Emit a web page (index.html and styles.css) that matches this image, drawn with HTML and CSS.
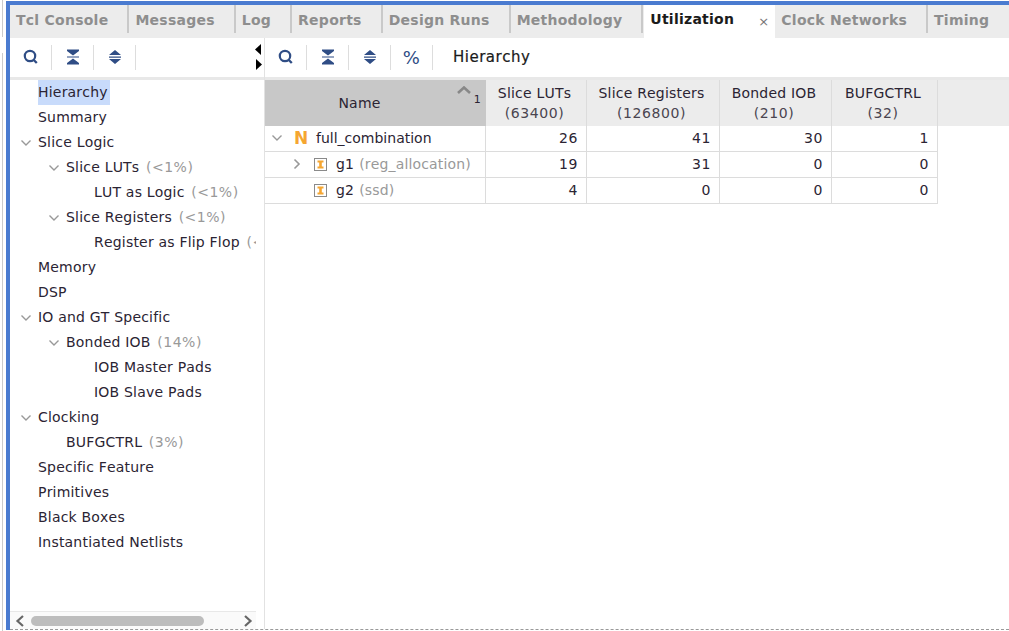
FILE: index.html

```html
<!DOCTYPE html>
<html lang="en">
<head>
    <meta charset="UTF-8">
    <title>Utilization</title>
    <link rel="stylesheet" href="styles.css">
</head>
<body>
    <svg class="defs" width="0" height="0">
        <symbol id="i-search" viewBox="0 0 16 16"><circle cx="7" cy="7" r="5.200" fill="none" stroke="#2f4d85" stroke-width="2.200"/><path d="M10.800 11 13.800 14" stroke="#2f4d85" stroke-width="2.400"/></symbol>
        <symbol id="i-collapse" viewBox="0 0 16 16"><path d="M2 0.500H14V2L8 6.500 2 2ZM2 7.500H14V8.500H2ZM8 9.500 14 14V15.500H2V14Z" fill="#2f4d85"/></symbol>
        <symbol id="i-expand" viewBox="0 0 16 16"><path d="M8 1 14 6H2ZM2 7.500H14V8.700H2ZM2 10H14L8 15Z" fill="#2f4d85"/></symbol>
        <symbol id="i-down" viewBox="0 0 12 12"><path d="M1.500 3.500 6 8 10.500 3.500" fill="none" stroke="#999" stroke-width="1.400"/></symbol>
        <symbol id="i-right" viewBox="0 0 12 12"><path d="M3.500 1.500 8 6 3.500 10.500" fill="none" stroke="#999" stroke-width="1.600"/></symbol>
        <symbol id="i-inst" viewBox="0 0 13 13"><rect x=".5" y=".5" width="12" height="12" fill="#fff" stroke="#8a8a8a"/><path d="M3.500 2.500H9.500V4.500H7.800V8.500H9.500V10.500H3.500V8.500H5.200V4.500H3.500Z" fill="#f5a631"/></symbol>
    </svg>

    <div class="window">
        <div class="tabs">
            <div class="tab">Tcl Console</div>
            <div class="tab">Messages</div>
            <div class="tab">Log</div>
            <div class="tab">Reports</div>
            <div class="tab">Design Runs</div>
            <div class="tab">Methodology</div>
            <div class="tab active">Utilization<span class="close">×</span></div>
            <div class="tab">Clock Networks</div>
            <div class="tab last">Timing</div>
        </div>

        <div class="main">
            <div class="left">
                <div class="toolbar">
                    <span class="tool"><svg width="16" height="16"><use href="#i-search"/></svg></span>
                    <span class="tool"><svg width="16" height="16"><use href="#i-collapse"/></svg></span>
                    <span class="tool"><svg width="16" height="16"><use href="#i-expand"/></svg></span>
                    <span class="splitter">
                        <svg width="7" height="11"><path d="M6 0V11L0 5.500Z"/></svg>
                        <svg width="7" height="11"><path d="M1 0V11L7 5.500Z"/></svg>
                    </span>
                </div>
                <div class="tree">
                    <div class="node l0"><span class="label selected">Hierarchy</span></div>
                    <div class="node l0"><span class="label">Summary</span></div>
                    <div class="node l0 open"><svg width="12" height="12"><use href="#i-down"/></svg><span class="label">Slice Logic</span></div>
                    <div class="node l1 open"><svg width="12" height="12"><use href="#i-down"/></svg><span class="label">Slice LUTs <em>(&lt;1%)</em></span></div>
                    <div class="node l2"><span class="label">LUT as Logic <em>(&lt;1%)</em></span></div>
                    <div class="node l1 open"><svg width="12" height="12"><use href="#i-down"/></svg><span class="label">Slice Registers <em>(&lt;1%)</em></span></div>
                    <div class="node l2"><span class="label">Register as Flip Flop <em>(&lt;1%)</em></span></div>
                    <div class="node l0"><span class="label">Memory</span></div>
                    <div class="node l0"><span class="label">DSP</span></div>
                    <div class="node l0 open"><svg width="12" height="12"><use href="#i-down"/></svg><span class="label">IO and GT Specific</span></div>
                    <div class="node l1 open"><svg width="12" height="12"><use href="#i-down"/></svg><span class="label">Bonded IOB <em>(14%)</em></span></div>
                    <div class="node l2"><span class="label">IOB Master Pads</span></div>
                    <div class="node l2"><span class="label">IOB Slave Pads</span></div>
                    <div class="node l0 open"><svg width="12" height="12"><use href="#i-down"/></svg><span class="label">Clocking</span></div>
                    <div class="node l1"><span class="label">BUFGCTRL <em>(3%)</em></span></div>
                    <div class="node l0"><span class="label">Specific Feature</span></div>
                    <div class="node l0"><span class="label">Primitives</span></div>
                    <div class="node l0"><span class="label">Black Boxes</span></div>
                    <div class="node l0"><span class="label">Instantiated Netlists</span></div>
                </div>
                <div class="hscroll">
                    <svg width="12" height="14"><path d="M9 2 3.500 7 9 12" fill="none" stroke="#666" stroke-width="2.200"/></svg>
                    <div class="track"><div class="thumb"></div></div>
                    <svg width="12" height="14"><path d="M3 2 8.500 7 3 12" fill="none" stroke="#666" stroke-width="2.200"/></svg>
                </div>
            </div>

            <div class="right">
                <div class="toolbar">
                    <span class="tool"><svg width="16" height="16"><use href="#i-search"/></svg></span>
                    <span class="tool"><svg width="16" height="16"><use href="#i-collapse"/></svg></span>
                    <span class="tool"><svg width="16" height="16"><use href="#i-expand"/></svg></span>
                    <span class="tool percent">%</span>
                    <span class="view-name">Hierarchy</span>
                </div>
                <table class="util">
                    <colgroup>
                        <col class="c-name"><col class="c-a"><col class="c-b"><col class="c-c"><col class="c-d"><col>
                    </colgroup>
                    <thead>
                        <tr>
                            <th class="sorted">Name<svg class="caret" width="14" height="8"><path d="M1 7 7 1.500 13 7" fill="none" stroke="#888" stroke-width="2.600"/></svg><span class="sort-no">1</span></th>
                            <th>Slice LUTs<br><span class="dim">(63400)</span></th>
                            <th>Slice Registers<br><span class="dim">(126800)</span></th>
                            <th>Bonded IOB<br><span class="dim">(210)</span></th>
                            <th>BUFGCTRL<br><span class="dim">(32)</span></th>
                            <th class="rest"></th>
                        </tr>
                    </thead>
                    <tbody>
                        <tr>
                            <td class="name"><svg class="tw" width="12" height="12"><use href="#i-down"/></svg><span class="n-icon">N</span>full_combination</td>
                            <td>26</td><td>41</td><td>30</td><td>1</td><td class="rest"></td>
                        </tr>
                        <tr>
                            <td class="name sub"><svg class="tw" width="12" height="12"><use href="#i-right"/></svg><svg class="inst" width="13" height="13"><use href="#i-inst"/></svg>g1 <em>(reg_allocation)</em></td>
                            <td>19</td><td>31</td><td>0</td><td>0</td><td class="rest"></td>
                        </tr>
                        <tr>
                            <td class="name sub"><span class="tw-gap"></span><svg class="inst" width="13" height="13"><use href="#i-inst"/></svg>g2 <em>(ssd)</em></td>
                            <td>4</td><td>0</td><td>0</td><td>0</td><td class="rest"></td>
                        </tr>
                    </tbody>
                </table>
            </div>
        </div>
    </div>
</body>
</html>
```

FILE: styles.css

```css
* {
    margin: 0;
    padding: 0;
    box-sizing: border-box;
}
html, body {
    width: 1009px;
    height: 631px;
    overflow: hidden;
    background-color: #fff;
}
body {
    padding: 1px 0 1px 6px;
    background-image: linear-gradient(#ccc, #ccc), linear-gradient(#ccc, #ccc);
    background-size: 1px 37px, 1px 578px;
    background-position: 2px 0, 2px 53px;
    background-repeat: no-repeat;
    font-family: "DejaVu Sans", sans-serif;
    font-size: 14px;
    font-kerning: none;
    letter-spacing: .2px;
    color: #2b2433;
}
.defs {
    position: absolute;
}
.window {
    height: 629px;
    display: flex;
    flex-direction: column;
    border-top: 4px solid #4a7bd0;
    border-left: 4px solid #4a7bd0;
}
.tabs {
    display: flex;
    height: 33px;
    flex-shrink: 0;
    overflow: hidden;
    background: #ececec;
    font-size: 14px;
    font-weight: bold;
    letter-spacing: .25px;
    color: #8e8e8e;
}
.tab {
    display: flex;
    align-items: center;
    flex-shrink: 0;
    white-space: nowrap;
    height: 28px;
    padding: 1px 19px 0 6px;
    border-right: 2px solid #c9c9c9;
}
.tab.active {
    height: 33px;
    margin-left: 1px;
    padding: 0 6px 5px 6px;
    background: #fff;
    color: #1b1b1b;
    border-right: 0;
}
.tab.last {
    border-right: 0;
}
.close {
    margin-left: 24px;
    font-weight: normal;
    color: #777;
    font-size: 13px;
    padding-top: 4px;
}
.main {
    flex: 1;
    display: flex;
    min-height: 0;
    border-bottom: 1px dashed #999;
}
.left {
    width: 255px;
    display: flex;
    flex-direction: column;
    border-right: 1px solid #e2e2e2;
}
.right {
    flex: 1;
    min-width: 0;
}
.toolbar {
    height: 42px;
    display: flex;
    align-items: center;
    background: #fff;
    border-bottom: 3px solid #e8e8e8;
    flex-shrink: 0;
    padding-top: 1px;
    padding-bottom: 2px;
}
.tool {
    width: 42px;
    height: 25px;
    display: flex;
    align-items: center;
    justify-content: center;
    border-right: 1px solid #ddd;
}
.percent {
    font-size: 18px;
    color: #2f4d85;
}
.view-name {
    margin-left: 20px;
    color: #1b1b1b;
    font-size: 15px;
    letter-spacing: .5px;
    -webkit-text-stroke: .2px #1b1b1b;
}
.splitter {
    margin-left: auto;
    margin-right: 2px;
    width: 7px;
    display: flex;
    flex-direction: column;
    gap: 4px;
}
.splitter svg {
    display: block;
}
.tree {
    flex: 1;
    width: 246px;
    overflow: hidden;
    min-height: 0;
}
.node {
    height: 25px;
    display: flex;
    align-items: center;
    white-space: nowrap;
    position: relative;
}
.node svg {
    position: absolute;
    top: 7px;
}
.l0 { padding-left: 28px; }
.l1 { padding-left: 56px; }
.l2 { padding-left: 84px; }
.l0 svg { left: 10px; }
.l1 svg { left: 38px; }
.label {
    height: 25px;
    line-height: 24px;
}
.selected {
    background: #c8dbfb;
    padding-right: 2px;
}
em {
    font-style: normal;
    color: #999;
    margin-left: 2px;
    letter-spacing: .5px;
}
.hscroll {
    width: 246px;
    height: 18px;
    flex-shrink: 0;
    display: flex;
    align-items: center;
    background: #fafafa;
    border-top: 1px solid #e8e8e8;
    padding: 0 2px 0 4px;
    gap: 5px;
}
.track {
    flex: 1;
}
.thumb {
    width: 173px;
    height: 10px;
    border-radius: 5px;
    background: #bdbdbd;
}
.util {
    width: 100%;
    border-collapse: separate;
    border-spacing: 0;
    table-layout: fixed;
}
.c-name { width: 221px; }
.c-a { width: 101px; }
.c-b { width: 133px; }
.c-c { width: 112px; }
.c-d { width: 106px; }
th {
    height: 46px;
    padding-right: 3px;
    background: #ececec;
    font-weight: normal;
    text-align: center;
    line-height: 20px;
    border-right: 1px solid #dcdcdc;
    color: #2b2433;
}
.dim {
    color: #4a4550;
    letter-spacing: .6px;
}
th.sorted {
    background: #c8c8c8;
    position: relative;
    border-right: 0;
    padding-right: 32px;
}
th.rest {
    border-right: 0;
}
.caret {
    position: absolute;
    right: 15px;
    top: 6px;
}
.sort-no {
    position: absolute;
    right: 5px;
    top: 10px;
    font-size: 11px;
}
td {
    height: 26px;
    text-align: right;
    padding-right: 8px;
    padding-bottom: 2px;
    letter-spacing: .6px;
    border-right: 1px solid #dcdcdc;
    border-bottom: 1px solid #dcdcdc;
    white-space: nowrap;
}
td.name {
    text-align: left;
    padding-left: 6px;
    padding-right: 0;
    letter-spacing: 0;
}
td.sub {
    padding-left: 26px;
}
td.sub em {
    margin-left: 1px;
    letter-spacing: .15px;
}
td.rest {
    border: 0;
}
.tw {
    vertical-align: -1px;
    margin-right: 6px;
}
.tw-gap {
    display: inline-block;
    width: 18px;
}
.n-icon {
    display: inline-block;
    width: 13px;
    margin-right: 9px;
    margin-left: 5px;
    color: #f5a631;
    font-weight: bold;
    font-size: 17px;
    line-height: 16px;
    vertical-align: -1px;
}
.inst {
    vertical-align: -2px;
    margin-left: 5px;
    margin-right: 9px;
}
```
